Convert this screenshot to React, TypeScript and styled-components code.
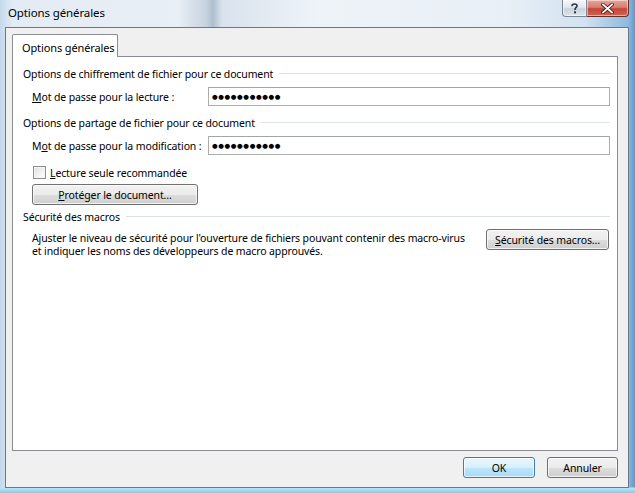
import React from 'react';
import styled, { createGlobalStyle } from 'styled-components';

const GlobalStyle = createGlobalStyle`
  html, body {
    margin: 0;
    padding: 0;
    height: 100%;
    overflow: hidden;
  }
  body {
    font-family: 'Noto Sans', 'Open Sans', sans-serif;
    font-size: 10.5px;
    letter-spacing: -0.12px;
    color: #000;
  }
`;

const Window = styled.div`
  width: 100vw;
  height: 100vh;
  display: flex;
  flex-direction: column;
  background:
    linear-gradient(180deg, rgba(255, 255, 255, 0) 0px, rgba(255, 255, 255, 0) 487px, #bfe6f7 488px, #7fcdee 493px),
    linear-gradient(90deg, #c3d9ec 0%, #e3ebf4 2%, #e9eff6 28%, #c6d3df 32.5%, #aebfcf 33.5%, #d9e3ed 35%, #eef3f8 50%, #e8eff6 80%, #d3e3f1 92%, #8db9de 99%, #5b98cf 100%);
`;

const TitleBar = styled.div`
  height: 27px;
  display: flex;
  align-items: flex-start;
  padding: 0 6px 0 8px;
  flex-shrink: 0;
`;

const Title = styled.div`
  font-size: 11.5px;
  line-height: 26px;
  color: #000;
`;

const CaptionButtons = styled.div`
  margin-left: auto;
  display: flex;
`;

const CaptionButton = styled.div<{ $close?: boolean }>`
  width: ${p => (p.$close ? 42 : 25)}px;
  height: 17px;
  box-sizing: border-box;
  border: 1px solid ${p => (p.$close ? '#6a2d28' : '#7a8896')};
  border-top: none;
  border-left: ${p => (p.$close ? 'none' : undefined)};
  border-radius: ${p => (p.$close ? '0 0 4px 0' : '0 0 0 4px')};
  background: ${p =>
    p.$close
      ? 'linear-gradient(180deg, #e7a597 0%, #d98070 45%, #c4453a 55%, #d2654f 100%)'
      : 'linear-gradient(180deg, #f4f6f9 0%, #e3e8ee 45%, #c9d2dc 55%, #dfe5eb 100%)'};
  box-shadow: inset 0 0 0 1px rgba(255, 255, 255, 0.5);
  display: flex;
  align-items: center;
  justify-content: center;
`;

const Client = styled.div`
  flex: 1;
  margin: 0 6px 5px 5px;
  border: 1px solid #6c7886;
  background: #f0f0f0;
  padding: 6px 10px 0 6px;
  display: flex;
  flex-direction: column;
`;

const TabStrip = styled.div`
  display: flex;
  height: 23px;
  margin-bottom: -1px;
`;

const Tab = styled.div`
  position: relative;
  z-index: 1;
  width: 106px;
  box-sizing: border-box;
  border: 1px solid #898c95;
  border-bottom: none;
  border-radius: 2px 2px 0 0;
  background: #fff;
  padding-left: 9px;
  font-size: 11px;
  line-height: 25px;
  white-space: nowrap;
`;

const TabPanel = styled.div`
  height: 395px;
  box-sizing: border-box;
  border: 1px solid #898c95;
  background: #fff;
  padding: 9px 7px 0 10px;
  display: flex;
  flex-direction: column;
`;

const SectionHeader = styled.div<{ $top: number }>`
  display: flex;
  align-items: center;
  height: 15px;
  margin-top: ${p => p.$top}px;
  gap: 6px;
  white-space: nowrap;

  &::after {
    content: '';
    flex: 1;
    height: 1px;
    background: #dde3e8;
  }
`;

const FieldRow = styled.div<{ $top: number }>`
  display: flex;
  align-items: center;
  margin-top: ${p => p.$top}px;
  padding-left: 9px;
`;

const FieldLabel = styled.div`
  width: 176px;
  flex-shrink: 0;
  white-space: nowrap;
`;

const PasswordBox = styled.div`
  flex: 1;
  height: 19px;
  box-sizing: border-box;
  border: 1px solid #abadb3;
  border-top-color: #a0a4ab;
  display: flex;
  align-items: center;
  padding-left: 3px;
  font-family: 'DejaVu Sans', sans-serif;
  font-size: 6.5px;
  letter-spacing: 0.6px;
  color: #000;
  overflow: hidden;
`;

const CheckRow = styled.div`
  display: flex;
  align-items: center;
  gap: 4px;
  margin-top: 10px;
  padding-left: 10px;
  height: 15px;
`;

const CheckBox = styled.div`
  width: 13px;
  height: 13px;
  box-sizing: border-box;
  border: 1px solid #8e8f8f;
  background: linear-gradient(135deg, #dcdcdc 0%, #f4f4f4 60%, #ffffff 100%);
  box-shadow: inset 0 0 0 1px #f4f4f4;
`;

const Button = styled.div<{ $width: number; $default?: boolean }>`
  width: ${p => p.$width}px;
  height: 21px;
  box-sizing: border-box;
  border: 1px solid ${p => (p.$default ? '#3c7fb1' : '#707070')};
  border-radius: 3px;
  background: ${p =>
    p.$default
      ? 'linear-gradient(180deg, #eaf6fd 0%, #d9f0fc 50%, #bee6fd 51%, #a7d9f5 100%)'
      : 'linear-gradient(180deg, #f2f2f2 0%, #ebebeb 50%, #dddddd 51%, #cfcfcf 100%)'};
  box-shadow: inset 0 0 0 1px rgba(255, 255, 255, 0.7);
  display: flex;
  align-items: center;
  justify-content: center;
  white-space: nowrap;
  flex-shrink: 0;
`;

const ProtectButton = styled(Button)`
  margin: 4px 0 0 9px;
`;

const MacroRow = styled.div`
  display: flex;
  align-items: flex-start;
  margin-top: 5px;
  padding-left: 9px;
  padding-right: 1px;
`;

const MacroText = styled.div`
  flex: 1;
  padding-top: 3px;
  line-height: 12.5px;
  white-space: nowrap;
`;

const Footer = styled.div`
  display: flex;
  justify-content: flex-end;
  gap: 12px;
  padding-top: 6px;
`;

const Key = styled.span`
  text-decoration: underline;
  text-underline-offset: 1px;
`;

const Dots = () => <PasswordBox>●●●●●●●●●●●</PasswordBox>;

export default function App() {
  return (
    <Window>
      <GlobalStyle />
      <TitleBar>
        <Title>Options générales</Title>
        <CaptionButtons>
          <CaptionButton>
            <svg width="9" height="11" viewBox="0 0 9 11">
              <path d="M2 3.2 C2 1.6 3.2 1 4.5 1 C6 1 7 1.8 7 3 C7 4.4 5 4.6 5 6.5 L5 7" fill="none" stroke="#2a3848" strokeWidth="1.6" />
              <rect x="4" y="8.3" width="2" height="2" fill="#2a3848" />
            </svg>
          </CaptionButton>
          <CaptionButton $close>
            <svg width="13" height="11" viewBox="0 0 13 11">
              <path d="M2 1.5 L11 9.5 M11 1.5 L2 9.5" stroke="#4a1c18" strokeWidth="3.6" strokeLinecap="square" />
              <path d="M2 1.5 L11 9.5 M11 1.5 L2 9.5" stroke="#fff" strokeWidth="1.8" strokeLinecap="square" />
            </svg>
          </CaptionButton>
        </CaptionButtons>
      </TitleBar>
      <Client>
        <TabStrip>
          <Tab>Options générales</Tab>
        </TabStrip>
        <TabPanel>
          <SectionHeader $top={0}>Options de chiffrement de fichier pour ce document</SectionHeader>
          <FieldRow $top={6}>
            <FieldLabel><Key>M</Key>ot de passe pour la lecture :</FieldLabel>
            <Dots />
          </FieldRow>
          <SectionHeader $top={9}>Options de partage de fichier pour ce document</SectionHeader>
          <FieldRow $top={6}>
            <FieldLabel>M<Key>o</Key>t de passe pour la modification :</FieldLabel>
            <Dots />
          </FieldRow>
          <CheckRow>
            <CheckBox />
            <span><Key>L</Key>ecture seule recommandée</span>
          </CheckRow>
          <ProtectButton $width={166}><span><Key>P</Key>rotéger le document...</span></ProtectButton>
          <SectionHeader $top={4}>Sécurité des macros</SectionHeader>
          <MacroRow>
            <MacroText>
              Ajuster le niveau de sécurité pour l'ouverture de fichiers pouvant contenir des macro-virus
              <br />
              et indiquer les noms des développeurs de macro approuvés.
            </MacroText>
            <Button $width={123}><span><Key>S</Key>écurité des macros...</span></Button>
          </MacroRow>
        </TabPanel>
        <Footer>
          <Button $width={72} $default>OK</Button>
          <Button $width={71}>Annuler</Button>
        </Footer>
      </Client>
    </Window>
  );
}
